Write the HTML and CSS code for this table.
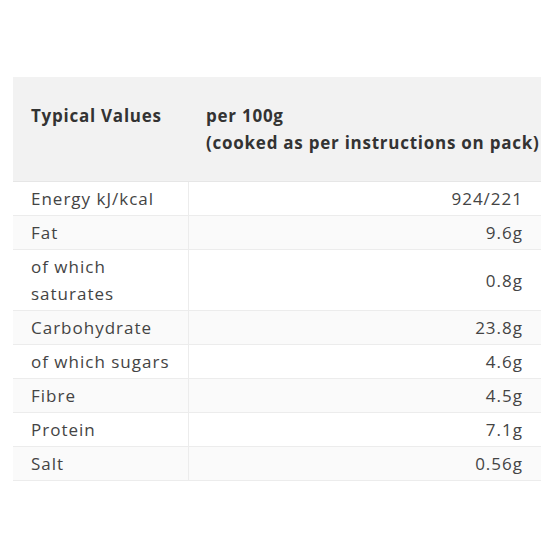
FILE: index.html
```html
<!DOCTYPE html>
<html>
<head>
<meta charset="utf-8">
<link rel="stylesheet" href="styles.css">
</head>
<body>
<table class="nutrition">
  <thead>
    <tr>
      <th class="label">Typical Values</th>
      <th class="head-value">per 100g<br>(cooked as per instructions on pack)</th>
    </tr>
  </thead>
  <tbody>
    <tr><td class="label">Energy kJ/kcal</td><td class="value">924/221</td></tr>
    <tr class="alt"><td class="label">Fat</td><td class="value">9.6g</td></tr>
    <tr><td class="label">of which<br>saturates</td><td class="value">0.8g</td></tr>
    <tr class="alt"><td class="label">Carbohydrate</td><td class="value">23.8g</td></tr>
    <tr><td class="label">of which sugars</td><td class="value">4.6g</td></tr>
    <tr class="alt"><td class="label">Fibre</td><td class="value">4.5g</td></tr>
    <tr><td class="label">Protein</td><td class="value">7.1g</td></tr>
    <tr class="alt"><td class="label">Salt</td><td class="value">0.56g</td></tr>
  </tbody>
</table>
</body>
</html>
```
FILE: styles.css
```css
html, body {
  margin: 0;
  background: #fff;
}
body {
  padding: 77px 19px 0 13px;
  font-family: "Open Sans", Lato, sans-serif;
  font-size: 17px;
  color: #444;
}
.nutrition {
  width: 528px;
  border-collapse: collapse;
  table-layout: fixed;
}
.nutrition th,
.nutrition td {
  line-height: 27px;
  vertical-align: middle;
}
.nutrition thead th {
  background: #f2f2f2;
  font-weight: 700;
  text-align: left;
  padding: 25px 0 25px 18px;
  color: #333;
  white-space: nowrap;
  letter-spacing: 0.75px;
  border-bottom: 1px solid #e6e6e6;
}
.nutrition thead th.label {
  width: 157px;
  vertical-align: top;
}
.nutrition td {
  padding: 3px 18px 3px 18px;
  border-bottom: 1px solid #ececec;
  font-weight: 400;
  letter-spacing: 1px;
}
.nutrition td.label {
  border-right: 1px solid #ececec;
}
.nutrition td.value {
  text-align: right;
  padding-right: 18px;
}
.nutrition tr.alt td {
  background: #fafafa;
}
```
